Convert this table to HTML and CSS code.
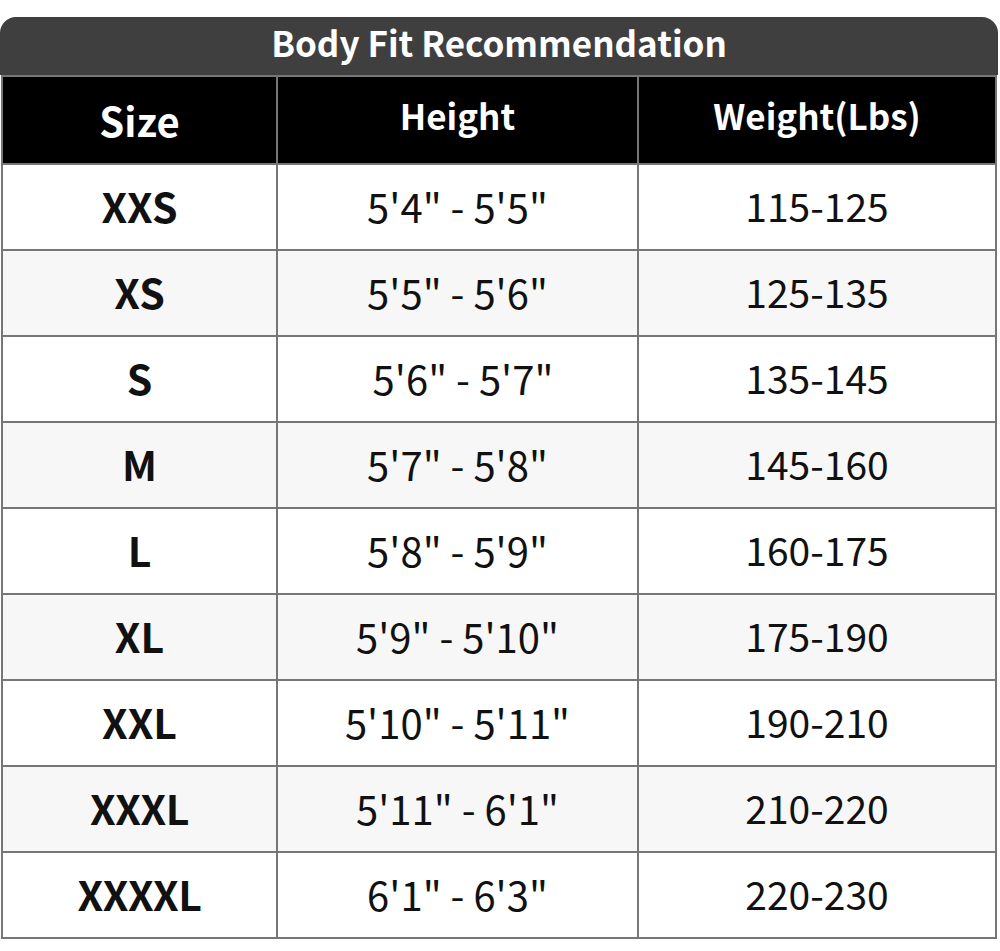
FILE: index.html
```html
<!DOCTYPE html>
<html lang="en">
<head>
<meta charset="utf-8">
<title>Body Fit Recommendation</title>
<link rel="stylesheet" href="styles.css">
</head>
<body>
<div class="chart">
  <div class="title">Body Fit Recommendation</div>
  <div class="grid">
    <div class="hcell size-h">Size</div>
    <div class="hcell">Height</div>
    <div class="hcell">Weight(Lbs)</div>

    <div class="cell sz">XXS</div><div class="cell ht">5'4" - 5'5"</div><div class="cell">115-125</div>
    <div class="cell sz alt">XS</div><div class="cell ht alt">5'5" - 5'6"</div><div class="cell alt">125-135</div>
    <div class="cell sz">S</div><div class="cell ht nudge">5'6" - 5'7"</div><div class="cell">135-145</div>
    <div class="cell sz alt">M</div><div class="cell ht alt">5'7" - 5'8"</div><div class="cell alt">145-160</div>
    <div class="cell sz">L</div><div class="cell ht">5'8" - 5'9"</div><div class="cell">160-175</div>
    <div class="cell sz alt">XL</div><div class="cell ht alt">5'9" - 5'10"</div><div class="cell alt">175-190</div>
    <div class="cell sz">XXL</div><div class="cell ht">5'10" - 5'11"</div><div class="cell">190-210</div>
    <div class="cell sz big alt">XXXL</div><div class="cell ht alt">5'11" - 6'1"</div><div class="cell alt">210-220</div>
    <div class="cell sz big">XXXXL</div><div class="cell ht">6'1" - 6'3"</div><div class="cell">220-230</div>
  </div>
</div>
</body>
</html>
```

FILE: styles.css
```css
* { box-sizing: border-box; }
html, body { margin: 0; padding: 0; background: #ffffff; }
body { font-family: "Noto Sans CJK SC", "Noto Sans", sans-serif; color: #111; }

.chart {
  width: 1000px;
  padding-top: 17px;
}

.title {
  width: 998px;
  height: 58px;
  background: #3f3f3f;
  border-radius: 16px 16px 0 0;
  color: #fff;
  font-weight: 700;
  font-size: 35px;
  display: flex;
  align-items: center;
  justify-content: center;
  padding-bottom: 9px;
  line-height: 1;
}

.grid {
  margin-left: 1px;
  width: 996px;
  display: grid;
  grid-template-columns: 273px 359px 356px;
  grid-template-rows: 86px repeat(9, 84px);
  gap: 2px;
  padding: 2px;
  background: #767676;
}

.hcell {
  background: #000;
  color: #fff;
  font-weight: 700;
  font-size: 35px;
  display: flex;
  align-items: center;
  justify-content: center;
  line-height: 1;
  padding-bottom: 11px;
}
.size-h { font-size: 40px; padding-bottom: 0; }

.cell {
  background: #fff;
  display: flex;
  align-items: center;
  justify-content: center;
  font-size: 39px;
  line-height: 1;
  color: #111;
  padding-bottom: 3px;
}
.cell.ht { font-size: 40px; }
.cell.alt { background: #f7f7f7; }
.sz { font-weight: 700; font-size: 41px; }
.sz.big { letter-spacing: -0.5px; }
.nudge { padding-left: 11px; }
```
